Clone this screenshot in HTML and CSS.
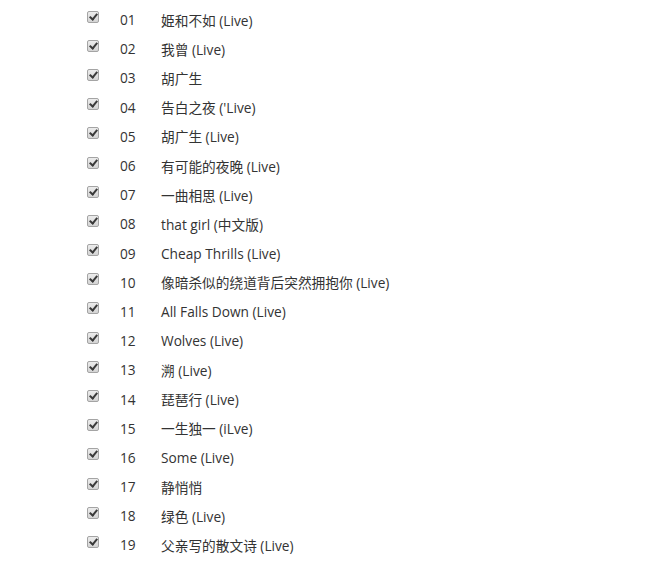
FILE: index.html
```html
<!DOCTYPE html>
<html lang="zh-CN">
<head>
    <meta charset="UTF-8">
    <title>歌曲列表</title>
    <link rel="stylesheet" href="styles.css">
</head>
<body>
    <ul class="song-list">
        <li class="song"><span class="check"></span><span class="num">01</span><span class="title">姫和不如 (Live)</span></li>
        <li class="song"><span class="check"></span><span class="num">02</span><span class="title">我曾 (Live)</span></li>
        <li class="song"><span class="check"></span><span class="num">03</span><span class="title">胡广生</span></li>
        <li class="song"><span class="check"></span><span class="num">04</span><span class="title">告白之夜 ('Live)</span></li>
        <li class="song"><span class="check"></span><span class="num">05</span><span class="title">胡广生 (Live)</span></li>
        <li class="song"><span class="check"></span><span class="num">06</span><span class="title">有可能的夜晚 (Live)</span></li>
        <li class="song"><span class="check"></span><span class="num">07</span><span class="title">一曲相思 (Live)</span></li>
        <li class="song"><span class="check"></span><span class="num">08</span><span class="title">that girl (中文版)</span></li>
        <li class="song"><span class="check"></span><span class="num">09</span><span class="title">Cheap Thrills (Live)</span></li>
        <li class="song"><span class="check"></span><span class="num">10</span><span class="title">像暗杀似的绕道背后突然拥抱你 (Live)</span></li>
        <li class="song"><span class="check"></span><span class="num">11</span><span class="title">All Falls Down (Live)</span></li>
        <li class="song"><span class="check"></span><span class="num">12</span><span class="title">Wolves (Live)</span></li>
        <li class="song"><span class="check"></span><span class="num">13</span><span class="title">溯 (Live)</span></li>
        <li class="song"><span class="check"></span><span class="num">14</span><span class="title">琵琶行 (Live)</span></li>
        <li class="song"><span class="check"></span><span class="num">15</span><span class="title">一生独一 (iLve)</span></li>
        <li class="song"><span class="check"></span><span class="num">16</span><span class="title">Some (Live)</span></li>
        <li class="song"><span class="check"></span><span class="num">17</span><span class="title">静悄悄</span></li>
        <li class="song"><span class="check"></span><span class="num">18</span><span class="title">绿色 (Live)</span></li>
        <li class="song"><span class="check"></span><span class="num">19</span><span class="title">父亲写的散文诗 (Live)</span></li>
    </ul>
</body>
</html>
```

FILE: styles.css
```css
body {
    margin: 0;
    padding: 0;
    background: #fff;
    font-family: "Open Sans", "Noto Sans CJK SC", sans-serif;
    font-size: 13.7px;
    color: #333;
}

.song-list {
    list-style: none;
    margin: 0;
    padding: 5px 0 0 87px;
}

.song {
    display: flex;
    align-items: center;
    height: 29.2px;
}

.check {
    position: relative;
    width: 10px;
    height: 10px;
    margin-top: -6px;
    border: 1px solid #a4a4a4;
    border-radius: 2px;
    background: linear-gradient(#ececec, #d4d4d4);
    flex-shrink: 0;
}

.check::after {
    content: "";
    position: absolute;
    left: 3px;
    top: 0px;
    width: 3px;
    height: 6px;
    border: solid #3a3a3a;
    border-width: 0 2px 2px 0;
    transform: rotate(40deg);
}

.num {
    width: 41px;
    margin-left: 21px;
}

.title {
    white-space: nowrap;
}
```
